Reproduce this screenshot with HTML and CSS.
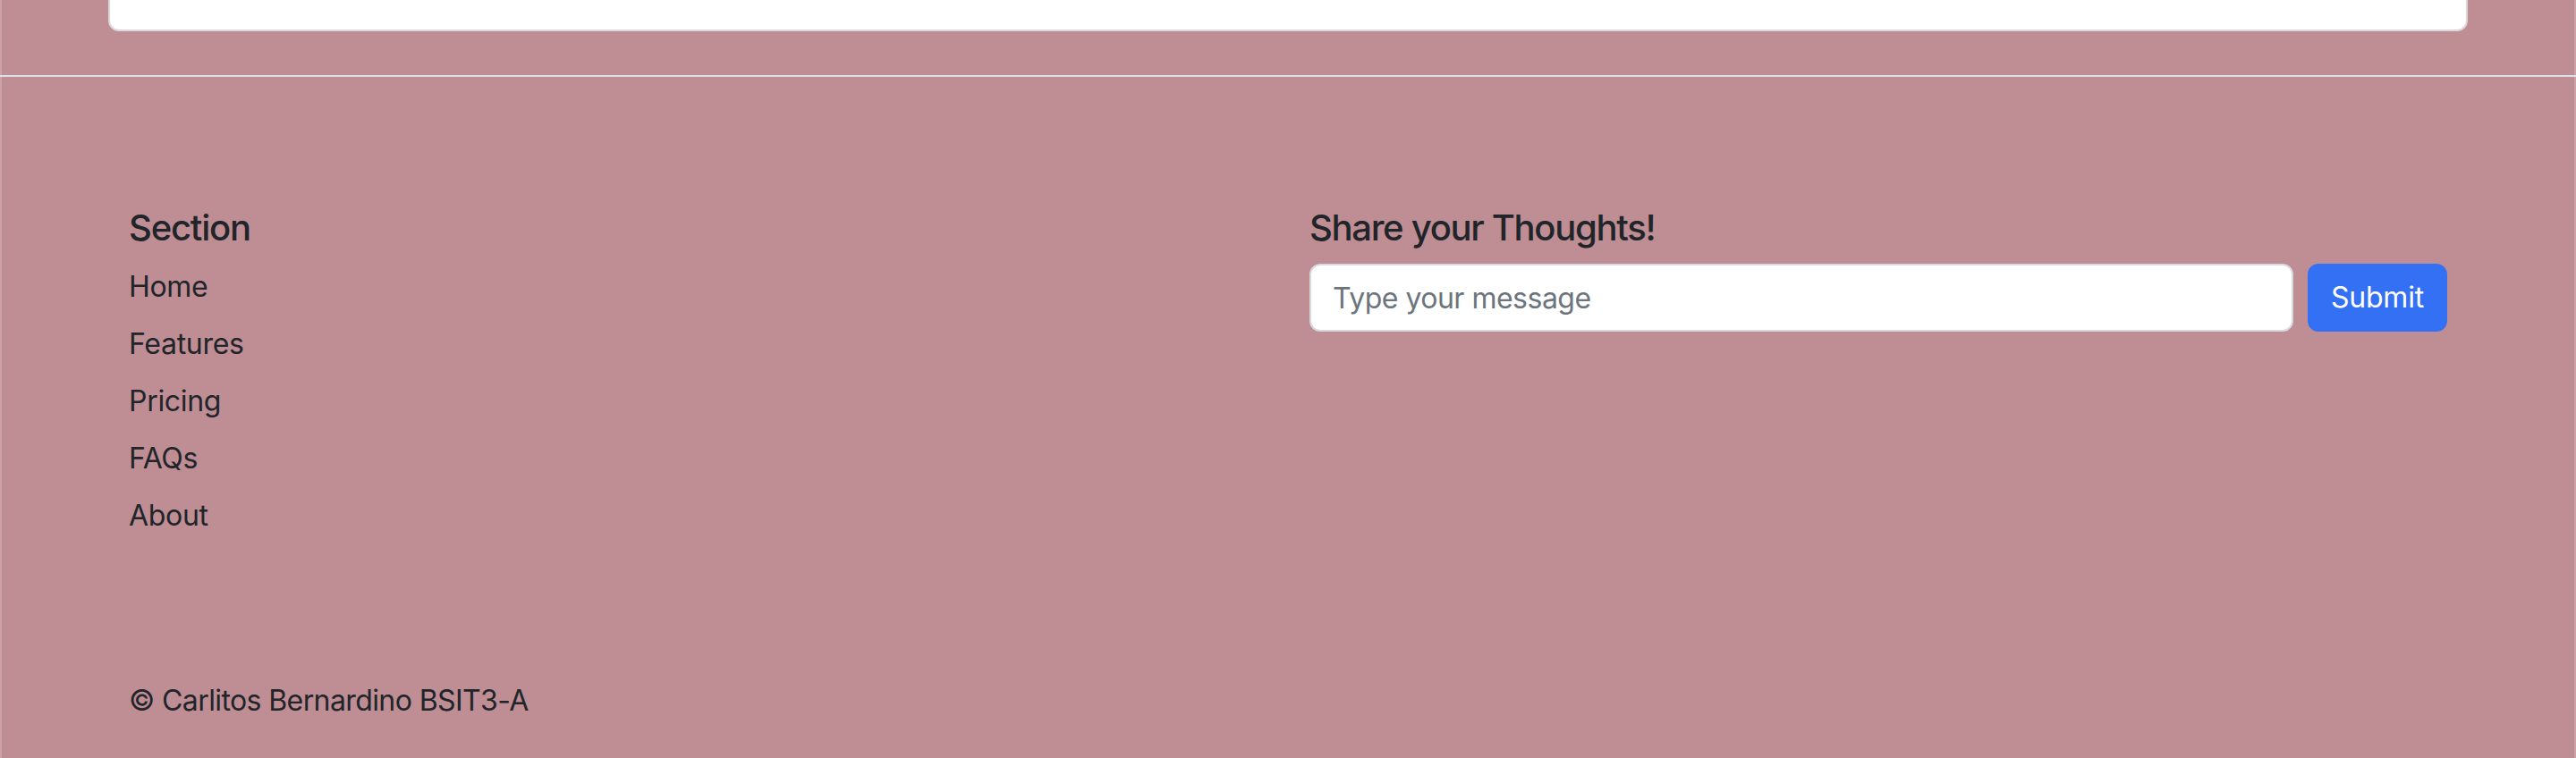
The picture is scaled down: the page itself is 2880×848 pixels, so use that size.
FILE: index.html
```html
<!DOCTYPE html>
<html lang="en">
<head>
<meta charset="utf-8">
<title>Footer</title>
<link rel="stylesheet" href="styles.css">
</head>
<body>
<div class="page">
  <div class="top-wrap">
    <div class="card"></div>
  </div>
  <footer class="footer">
    <div class="footer-row">
      <div class="col-nav">
        <h5 class="heading heading-nav">Section</h5>
        <ul class="nav">
          <li class="nav-item"><a href="#" class="nav-link">Home</a></li>
          <li class="nav-item"><a href="#" class="nav-link">Features</a></li>
          <li class="nav-item"><a href="#" class="nav-link">Pricing</a></li>
          <li class="nav-item"><a href="#" class="nav-link">FAQs</a></li>
          <li class="nav-item"><a href="#" class="nav-link">About</a></li>
        </ul>
      </div>
      <div class="col-form">
        <form class="thoughts">
          <h5 class="heading heading-form">Share your Thoughts!</h5>
          <div class="form-row">
            <input class="form-control" type="text" placeholder="Type your message">
            <button class="btn" type="button">Submit</button>
          </div>
        </form>
      </div>
    </div>
    <div class="footer-bottom">
      <p class="copy">© Carlitos Bernardino BSIT3-A</p>
    </div>
  </footer>
</div>
</body>
</html>
```

FILE: styles.css
```css
html, body {
  margin: 0;
  padding: 0;
}

body {
  background: #bf8d94;
  color: #212529;
  font-family: "Inter", "Noto Sans", sans-serif;
  height: 848px;
  overflow: hidden;
}

.page {
  min-height: 848px;
  box-sizing: border-box;
  border-left: 2px solid #cda3a9;
  border-right: 2px solid #cda3a9;
}

.top-wrap {
  padding: 0 119px 0 119px;
}

.card {
  height: 35px;
  background: #ffffff;
  box-sizing: border-box;
  border: 2px solid #dcd7d8;
  border-top: none;
  border-radius: 0 0 12px 12px;
}

.footer {
  margin-top: 49px;
  margin-left: -2px;
  margin-right: -2px;
  border-top: 2px solid #dfe0e4;
  padding: 145px 0 0 144px;
}

.footer-row {
  display: flex;
}

.col-nav {
  flex: 0 0 1320px;
}

.col-form {
  flex: 0 0 1272px;
}

.heading {
  margin: 0;
  font-size: 40px;
  line-height: 48px;
  font-weight: 500;
}

.heading-nav {
  margin-bottom: 18px;
  letter-spacing: -1.2px;
}

.heading-form {
  margin-bottom: 16px;
  letter-spacing: -1.3px;
}

.nav {
  list-style: none;
  margin: 0;
  padding: 0;
}

.nav-item {
  margin-bottom: 16px;
}

.nav-link {
  display: block;
  font-size: 32px;
  line-height: 48px;
  color: #212529;
  text-decoration: none;
  letter-spacing: -0.3px;
}

.form-row {
  display: flex;
  gap: 16px;
}

.form-control {
  flex: 1 1 auto;
  min-width: 0;
  box-sizing: border-box;
  height: 76px;
  padding: 12px 24px;
  font-family: inherit;
  font-size: 32px;
  line-height: 48px;
  color: #212529;
  background: #ffffff;
  border: 2px solid #d6d9dd;
  border-radius: 12px;
  outline: none;
  letter-spacing: -0.5px;
}

.form-control::placeholder {
  color: #6c757d;
}

.btn {
  flex: 0 0 auto;
  box-sizing: border-box;
  height: 76px;
  padding: 12px 24px;
  font-family: inherit;
  font-size: 32px;
  line-height: 48px;
  color: #ffffff;
  background: #3470f3;
  border: 2px solid #3470f3;
  border-radius: 12px;
  letter-spacing: -0.2px;
}

.footer-bottom {
  margin-top: 143px;
}

.copy {
  margin: 0;
  font-size: 32px;
  line-height: 48px;
  letter-spacing: -0.6px;
}
```
